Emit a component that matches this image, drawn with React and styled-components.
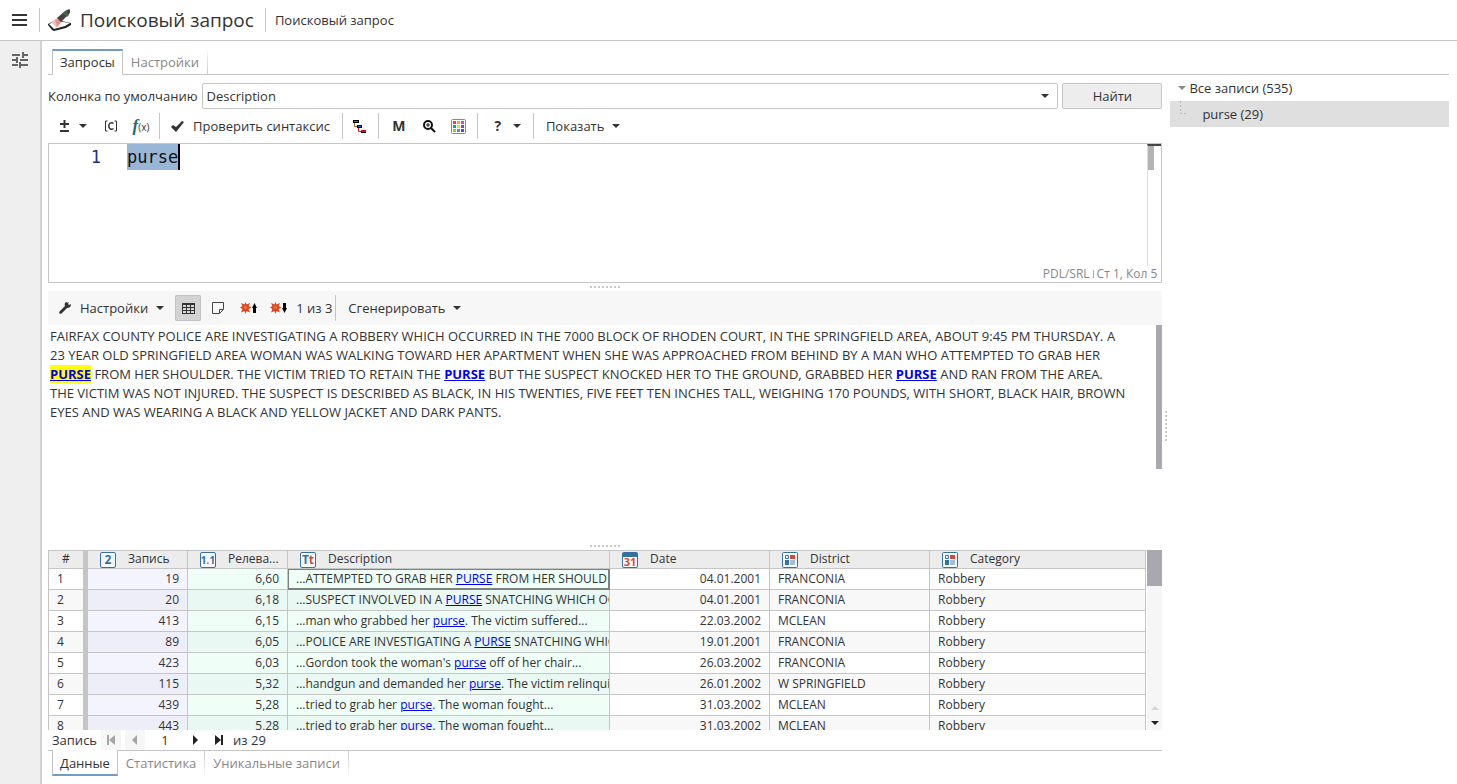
import React from "react";
import styled, { createGlobalStyle, css } from "styled-components";

const line = "#c5c5c5";

const GlobalStyle = createGlobalStyle`
  *, *::before, *::after { box-sizing: border-box; }
  body {
    margin: 0;
    background: #fff;
    color: #333;
    font: 13px/18px "Open Sans", "Noto Sans", sans-serif;
  }
  button, input, select, textarea { font: inherit; color: inherit; }
  svg { display: block; flex: none; }
`;

const Page = styled.div`
  display: flex;
  flex-direction: column;
  height: 100vh;
  min-height: 640px;
`;

const Header = styled.header`
  display: flex;
  align-items: center;
  height: 41px;
  flex: none;
  border-bottom: 1px solid ${line};
`;

const plainButton = css`
  display: flex;
  align-items: center;
  justify-content: center;
  padding: 0;
  border: 0;
  background: none;
  cursor: pointer;
`;

const MenuToggle = styled.button`
  ${plainButton}
  width: 40px;
  height: 24px;
  border-right: 1px solid ${line};
`;

const Title = styled.h1`
  display: flex;
  align-items: center;
  gap: 9px;
  height: 24px;
  margin: 0;
  padding: 0 11px 0 8px;
  border-right: 1px solid ${line};
  font-size: 19px;
  line-height: 24px;
  font-weight: 400;
  white-space: nowrap;
`;

const Crumb = styled.span`
  padding-left: 9px;
`;

const Body = styled.div`
  display: flex;
  flex: 1;
  min-height: 0;
`;

const Rail = styled.aside`
  width: 42px;
  flex: none;
  padding-top: 9px;
  background: #efefef;
  border-right: 2px solid #d2d2d2;
`;

const RailButton = styled.button`
  ${plainButton}
  width: 40px;
  height: 22px;
`;

const Workspace = styled.main`
  display: flex;
  flex-direction: column;
  flex: 1;
  min-width: 0;
  padding: 8px 8px 8px 6px;
`;

const TabBar = styled.nav`
  display: flex;
  flex: none;
  height: 26px;
  padding-left: 4px;
  ${(p) =>
    p.$bottom
      ? css`box-shadow: inset 0 1px ${line};`
      : css`box-shadow: inset 0 -1px ${line};`}
`;

const Tab = styled.button`
  ${plainButton}
  padding: 0 8px;
  color: #888;
  border-right: 1px solid;
  border-image: ${(p) =>
    `linear-gradient(${p.$bottom ? "0deg" : "180deg"}, #fff, ${line}) 1`};
  white-space: nowrap;
  ${(p) =>
    p.$active &&
    css`
      padding: 0 7px;
      color: #333;
      background: #fff;
      border: 1px solid ${line};
      border-image: none;
      ${p.$bottom
        ? css`padding-top: 2px; border-top: 0; border-bottom: 2px solid #6f9bc5;`
        : css`padding-bottom: 2px; border-bottom: 0; border-top: 2px solid #6f9bc5;`}
    `}
`;

const Panes = styled.div`
  display: grid;
  grid-template-columns: minmax(0, 4fr) 8px minmax(0, 1fr);
  flex: 1;
  min-height: 0;
`;

const QueryPane = styled.section`
  display: flex;
  flex-direction: column;
  min-height: 0;
  padding-top: 8px;
`;

const QueryRow = styled.div`
  display: flex;
  align-items: center;
  gap: 4px;
  flex: none;
`;

const SelectBox = styled.div`
  display: grid;
  grid-template-columns: 1fr 24px;
  align-items: center;
  flex: 1;
  height: 26px;
  border: 1px solid ${line};
  border-radius: 2px;

  select {
    grid-area: 1 / 1 / 2 / 3;
    height: 24px;
    padding: 0 4px;
    border: 0;
    background: none;
    appearance: none;
  }
  svg { grid-area: 1 / 2; justify-self: center; }
`;

const FindButton = styled.button`
  ${plainButton}
  width: 100px;
  height: 26px;
  background: #ededed;
  border: 1px solid ${line};
  border-radius: 2px;
`;

const Toolbar = styled.div`
  display: flex;
  align-items: center;
  flex: none;
  height: 34px;
  ${(p) => p.$shaded && css`background: #f7f7f7; padding-left: 1px;`}
`;

const ToolGroup = styled.div`
  display: flex;
  align-items: center;
  height: 26px;
  padding: 0 ${(p) => p.$after ?? 3}px 0 ${(p) => p.$before ?? 2}px;
  border-right: 1px solid ${(p) => (p.$last ? "transparent" : line)};
`;

const ToolButton = styled.button`
  ${plainButton}
  gap: 8px;
  height: 26px;
  padding: 0 9px;
  white-space: nowrap;
`;

const IconButton = styled.button`
  ${plainButton}
  width: 26px;
  height: 26px;
  margin: 0 2px;
  border-radius: 1px;
  ${(p) => p.$pressed && css`background: #d3d3d3; border: 1px solid #c3c3c3;`}
`;

const Counter = styled.span`
  padding-left: 3px;
`;

const Editor = styled.div`
  display: grid;
  grid-template-columns: 78px 1fr 14px;
  grid-template-rows: 1fr 16px;
  flex: none;
  height: 140px;
  border: 1px solid ${line};
`;

const LineNumber = styled.div`
  padding-right: 26px;
  color: #1c2f8c;
  text-align: right;
  font: 17px/26px "DejaVu Sans Mono", monospace;
`;

const Code = styled.textarea`
  padding: 0;
  border: 0;
  outline: 0;
  resize: none;
  overflow: hidden;
  color: #111;
  font: 17px/26px "DejaVu Sans Mono", monospace;
  background:
    linear-gradient(#000, #000) 51px 0 / 2px 26px no-repeat,
    linear-gradient(#99b6d7, #99b6d7) 0 0 / 52px 26px no-repeat;
`;

const Ruler = styled.div`
  border-left: 1px solid #ddd;
  border-top: 2px solid #444;

  &::before {
    content: "";
    display: block;
    width: 6px;
    height: 24px;
    background: #b3b3b3;
  }
`;

const EditorStatus = styled.footer`
  grid-column: 1 / -1;
  display: flex;
  justify-content: flex-end;
  align-items: center;
  gap: 3px;
  padding-right: 4px;
  color: #888;
  font-size: 12px;
  line-height: 16px;

  i { width: 1px; height: 8px; background: #aaa; }
`;

const Splitter = styled.div`
  display: flex;
  align-items: center;
  justify-content: center;
  flex: none;
  height: ${(p) => (p.$vertical ? "auto" : "8px")};

  &::before {
    content: "";
    width: ${(p) => (p.$vertical ? "2px" : "30px")};
    height: ${(p) => (p.$vertical ? "30px" : "2px")};
    background: repeating-linear-gradient(
      ${(p) => (p.$vertical ? "180deg" : "90deg")},
      #c9c9c9 0 2px,
      transparent 2px 4px
    );
  }
`;

const Document = styled.article`
  display: grid;
  grid-template-columns: 1fr 6px;
  flex: none;
  height: 217px;

  p { margin: 0; padding: 2px 28px 2px 2px; line-height: 19px; }
`;

const DocumentThumb = styled.div`
  height: 144px;
  background: #a8a8ae;
`;

const Hit = styled.a`
  color: #0000ee;
  font-weight: ${(p) => (p.$strong ? 700 : 400)};
  background: ${(p) => (p.$current ? "#ff0" : "none")};
`;

const TableArea = styled.div`
  display: grid;
  grid-template-columns: minmax(0, 1fr) 15px;
  column-gap: 1px;
  flex: 1;
  min-height: 0;
  overflow: hidden;
`;

const TableClip = styled.div`
  overflow: hidden;
`;

const Table = styled.table`
  width: 100%;
  table-layout: fixed;
  border-spacing: 0;
  border-top: 1px solid ${line};
  font-size: 12px;
  line-height: 16px;
`;

const HeadCell = styled.th`
  height: 18px;
  padding: 0 8px 0 12px;
  text-align: left;
  vertical-align: top;
  font-weight: 400;
  background: #ececec;
  border-right: 1px solid ${line};
  border-bottom: 1px solid ${line};

  &:first-child {
    padding: 0;
    text-align: center;
    border-left: 1px solid ${line};
    border-right-width: 5px;
  }
`;

const HeadLabel = styled.span`
  display: flex;
  align-items: flex-start;
  gap: 12px;
  height: 17px;

  > :first-child { margin-top: 1px; }
`;

const tints = {
  plain: ["#fff", "#f8f8f8"],
  violet: ["#f4f4ff", "#eeeef8"],
  green: ["#effff8", "#e9f8f2"],
};

const Cell = styled.td`
  height: 21px;
  padding: 0 8px;
  overflow: hidden;
  white-space: nowrap;
  text-align: ${(p) => (p.$right ? "right" : "left")};
  background: ${(p) => tints[p.$tint || "plain"][0]};
  border-right: 1px solid ${line};
  border-bottom: 1px solid ${line};

  tr:nth-child(even) & { background: ${(p) => tints[p.$tint || "plain"][1]}; }
  &:first-child { border-left: 1px solid ${line}; border-right-width: 5px; }
  ${(p) => p.$focused && css`box-shadow: inset 0 0 0 1px #808080; border-color: #808080;`}
`;

const TableScroll = styled.div`
  display: flex;
  flex-direction: column;
  align-items: center;
  gap: 11px;
  padding-bottom: 5px;
  background: #f6f6f6;

  &::before {
    content: "";
    width: 15px;
    height: 36px;
    margin-bottom: auto;
    background: #a8a8ae;
  }
`;

const Pager = styled.div`
  display: flex;
  align-items: center;
  flex: none;
  height: 20px;
  padding-left: 4px;

  label { margin-right: 2px; }

  input {
    width: 36px;
    height: 18px;
    padding: 0;
    border: 0;
    background: none;
    text-align: center;
  }
`;

const PageButton = styled.button`
  ${plainButton}
  width: 20px;
  height: 20px;
  margin: 0 2px;
  color: #222;
  &:disabled { color: #a5a5a5; background: #f6f6f6; }
  & + span { margin-left: 2px; }
`;

const Tree = styled.ul`
  margin: 0;
  padding: 0;
  list-style: none;

  ul { margin: 0; padding: 0; list-style: none; }
`;

const TreeItem = styled.button`
  ${plainButton}
  justify-content: flex-start;
  gap: ${(p) => (p.$child ? "14px" : "3px")};
  width: 100%;
  height: 26px;
  padding-left: ${(p) => (p.$child ? "10px" : "8px")};
  background: ${(p) => (p.$child ? "#dfdfdf" : "none")};
`;

const Caret = ({ color = "#333", up }) => (
  <svg width="8" height="4" viewBox="0 0 8 4" fill={color}>
    <path d={up ? "M0 4h8L4 0z" : "M0 0h8L4 4z"} />
  </svg>
);

const BurgerIcon = () => (
  <svg width="16" height="12" viewBox="0 0 16 12" fill="#333">
    <path d="M0 0h15v2H0zM0 5h15v2H0zM0 10h15v2H0z" />
  </svg>
);

const LogoIcon = () => (
  <svg width="23" height="22" viewBox="0 0 23 22">
    <path d="M0 15l8-4 15 3v2l-5 3-12 3-2-1-4-5z" fill="#222" />
    <path d="M1 15l7-3 14 2-5 3-11 3z" fill="#fff" />
    <path d="M3 13l6-4 4 4-4 6z" fill="#f5c0bb" />
    <path d="M7 11l3-1 3 3-4 5z" fill="#e5928b" />
    <path d="M9 9l8-7 4-2 1 1v3l-9 9z" fill="#454244" />
    <path d="M15 4l4 4 2-2-3-4z" fill="#3f6a45" />
  </svg>
);

const SlidersIcon = () => (
  <svg width="18" height="18" viewBox="0 0 18 18" fill="none" stroke="#666" strokeWidth="2">
    <path d="M1 3h8M12 3h5M12 0v6M1 8h5M9 8h8M6 5v6M1 13h6M10 13h7M9 10v6" />
  </svg>
);

const PlusMinusIcon = () => (
  <svg width="14" height="14" viewBox="0 0 14 14" stroke="#333" strokeWidth="2">
    <path d="M3 5h9M7.500 1v8M3 12h9" />
  </svg>
);

const Glyph = styled.span`
  display: block;
  width: 14px;
  text-align: center;
  font-size: 14px;
  font-weight: 700;
  line-height: 18px;
`;

const BracketIcon = () => (
  <svg width="14" height="12" viewBox="0 0 14 12" fill="none" stroke="#333">
    <path d="M3.500 1h-2v10h2M10.500 1h2v10h-2" />
    <path d="M9.500 3.500C7 1.800 4.800 3.500 4.800 6S7 10.200 9.500 8.500" strokeWidth="1.500" />
  </svg>
);

const FunctionGlyph = styled.span`
  color: #333;
  font: 10px/18px "Open Sans", sans-serif;

  i {
    color: #1f6a78;
    font: italic 700 17px/18px "Liberation Serif", serif;
  }
`;

const CheckIcon = () => (
  <svg width="14" height="12" viewBox="0 0 14 12" fill="#333">
    <path d="M0 7l2-2 3 2 6-6 2 1-8 10z" />
  </svg>
);

const HierarchyIcon = () => (
  <svg width="14" height="14" viewBox="0 0 14 14">
    <path d="M1.500 4v3.500H4" fill="none" stroke="#9a6a10" />
    <path d="M5.500 9v3.500H8" fill="none" stroke="#d02010" />
    <path d="M0 1h6v3H0zM4 6h5v3H4zM8 11h5v3H8z" fill="#000" />
    <path d="M1 2h4v1H1zM5 7h3v1H5z" fill="#1d5cff" />
    <path d="M8 11h5v2H8z" fill="#f00000" />
  </svg>
);

const ZoomIcon = () => (
  <svg width="14" height="14" viewBox="0 0 14 14" fill="none" stroke="#111">
    <circle cx="6" cy="6" r="4" strokeWidth="2" />
    <path d="M9 9l4 4" strokeWidth="2" />
    <path d="M4 6h4M6 4v4" />
  </svg>
);

const paletteColors = ["#ee4035", "#f0a92f", "#e538e0", "#17a47c", "#f2d928", "#8d35df", "#74df35", "#319ae5", "#6140e4"];

const PaletteIcon = () => (
  <svg width="15" height="15" viewBox="0 0 15 15">
    <rect x=".5" y=".5" width="14" height="14" rx="1" fill="#fff" stroke="#888" />
    {paletteColors.map((c, i) => (
      <rect key={c} x={2 + (i % 3) * 4} y={2 + Math.floor(i / 3) * 4} width="3" height="3" fill={c} />
    ))}
  </svg>
);

const WrenchIcon = () => (
  <svg width="14" height="14" viewBox="0 0 14 14" fill="#333">
    <path d="M9 2l2-1-1 2 1 1 2-1c0 3-2 4-4 4l-5 5c-2 2-4 0-2-2l5-5c-1-2 0-4 2-4z" />
  </svg>
);

const GridIcon = () => (
  <svg width="13" height="11" viewBox="0 0 13 11">
    <path d="M0 0h13v11H0z" fill="#333" />
    <path d="M1 2h3v2H1zM5 2h3v2H5zM9 2h3v2H9zM1 5h3v2H1zM5 5h3v2H5zM9 5h3v2H9zM1 8h3v2H1zM5 8h3v2H5zM9 8h3v2H9z" fill="#d8d8d8" />
  </svg>
);

const NoteIcon = () => (
  <svg width="12" height="12" viewBox="0 0 12 12" fill="none" stroke="#444">
    <path d="M.5.5h11v7l-4 4h-7zM7.500 11V7.500H11" />
  </svg>
);

const BurstIcon = ({ down }) => (
  <svg width="17" height="12" viewBox="0 0 17 12">
    <path d="M5.500 0l1 2.500L10 1 8.500 4l3 1.500-3 1.500L10 10.500 6.500 9l-1 3-1-3L1 10.500 2.500 7 0 5.500 2.500 4 1 1l3.500 1.500z" fill="#d8401c" />
    <circle cx="5.500" cy="5.500" r="2" fill="#ee6a30" />
    <path d={down ? "M13 1h3v5h1l-2.500 5L12 6h1z" : "M13 11h3V6h1l-2.500-5L12 6h1z"} fill="#000" />
  </svg>
);

const TypeBox = styled.span`
  display: flex;
  align-items: center;
  justify-content: center;
  width: 16px;
  height: 16px;
  color: #33719f;
  background: #f7fafc;
  border: 1px solid #33719f;
  border-radius: 2px;
  font-size: ${(p) => (p.$small ? "10px" : "12px")};
  font-weight: 700;
  line-height: 14px;

  em { color: #d9483b; font-style: normal; }
`;

const CalendarBox = styled.span`
  width: 16px;
  height: 16px;
  color: #d9483b;
  background: #fff;
  border: 1px solid #33719f;
  border-top-width: 5px;
  border-radius: 2px;
  font-size: 11px;
  font-weight: 700;
  line-height: 10px;
  text-align: center;
`;

const CategoryIcon = () => (
  <svg width="16" height="16" viewBox="0 0 16 16">
    <rect x=".5" y=".5" width="15" height="15" rx="1" fill="#f7fafc" stroke="#33719f" />
    <path d="M3.500 3.500h3v3h-3z" fill="#fff" stroke="#33719f" />
    <path d="M8 3h5v4H8z" fill="#d9483b" />
    <path d="M3 8h4v5H3z" fill="#33719f" />
    <path d="M8 8h5v5H8z" fill="#a3bfd3" />
  </svg>
);

const pageShapes = {
  first: "M1 0h2v10H1zM9 0v10L3 5z",
  prev: "M7 0v10L2 5z",
  next: "M3 0v10l5-5z",
  last: "M1 0v10l6-5zM7 0h2v10H7z",
};

const PageIcon = ({ kind }) => (
  <svg width="10" height="10" viewBox="0 0 10 10" fill="currentColor">
    <path d={pageShapes[kind]} />
  </svg>
);

const columns = [
  { label: "Запись", width: 100, icon: <TypeBox>2</TypeBox> },
  { label: "Релева...", width: 100, icon: <TypeBox $small>1<em>.</em>1</TypeBox> },
  { label: "Description", width: 322, icon: <TypeBox>T<em>t</em></TypeBox> },
  { label: "Date", width: 160, icon: <CalendarBox>31</CalendarBox> },
  { label: "District", width: 160, icon: <CategoryIcon /> },
  { label: "Category", icon: <CategoryIcon /> },
];

const rows = [
  [19, "6,60", "...ATTEMPTED TO GRAB HER ", "PURSE", " FROM HER SHOULD", "04.01.2001", "FRANCONIA"],
  [20, "6,18", "...SUSPECT INVOLVED IN A ", "PURSE", " SNATCHING WHICH OCCURRED", "04.01.2001", "FRANCONIA"],
  [413, "6,15", "...man who grabbed her ", "purse", ". The victim suffered...", "22.03.2002", "MCLEAN"],
  [89, "6,05", "...POLICE ARE INVESTIGATING A ", "PURSE", " SNATCHING WHICH", "19.01.2001", "FRANCONIA"],
  [423, "6,03", "...Gordon took the woman's ", "purse", " off of her chair...", "26.03.2002", "FRANCONIA"],
  [115, "5,32", "...handgun and demanded her ", "purse", ". The victim relinquished", "26.01.2002", "W SPRINGFIELD"],
  [439, "5,28", "...tried to grab her ", "purse", ". The woman fought...", "31.03.2002", "MCLEAN"],
  [443, "5,28", "...tried to grab her ", "purse", ". The woman fought...", "31.03.2002", "MCLEAN"],
];

function Results() {
  return (
    <TableArea>
      <TableClip>
        <Table>
          <colgroup>
            <col width="40" />
            {columns.map((c) => <col key={c.label} width={c.width} />)}
          </colgroup>
          <thead>
            <tr>
              <HeadCell>#</HeadCell>
              {columns.map((c) => (
                <HeadCell key={c.label}><HeadLabel>{c.icon}{c.label}</HeadLabel></HeadCell>
              ))}
            </tr>
          </thead>
          <tbody>
            {rows.map(([record, score, before, hit, after, date, district], i) => (
              <tr key={record}>
                <Cell>{i + 1}</Cell>
                <Cell $right $tint="violet">{record}</Cell>
                <Cell $right $tint="green">{score}</Cell>
                <Cell $tint="green" $focused={i === 0}>{before}<Hit href="#">{hit}</Hit>{after}</Cell>
                <Cell $right>{date}</Cell>
                <Cell>{district}</Cell>
                <Cell>Robbery</Cell>
              </tr>
            ))}
          </tbody>
        </Table>
      </TableClip>
      <TableScroll><Caret up color="#d3d3d3" /><Caret color="#222" /></TableScroll>
    </TableArea>
  );
}

export default function App() {
  return (
    <Page>
      <GlobalStyle />
      <Header>
        <MenuToggle aria-label="Меню"><BurgerIcon /></MenuToggle>
        <Title><LogoIcon />Поисковый запрос</Title>
        <Crumb>Поисковый запрос</Crumb>
      </Header>
      <Body>
        <Rail><RailButton aria-label="Параметры"><SlidersIcon /></RailButton></Rail>
        <Workspace>
          <TabBar>
            <Tab $active>Запросы</Tab>
            <Tab>Настройки</Tab>
          </TabBar>
          <Panes>
            <QueryPane>
              <QueryRow>
                <label htmlFor="column">Колонка по умолчанию</label>
                <SelectBox>
                  <select id="column"><option>Description</option></select>
                  <Caret />
                </SelectBox>
                <FindButton>Найти</FindButton>
              </QueryRow>
              <Toolbar>
                <ToolGroup $before={0}>
                  <ToolButton aria-label="Операторы"><PlusMinusIcon /><Caret /></ToolButton>
                  <IconButton aria-label="Класс"><BracketIcon /></IconButton>
                  <IconButton aria-label="Функция"><FunctionGlyph><i>f</i>(x)</FunctionGlyph></IconButton>
                </ToolGroup>
                <ToolGroup>
                  <ToolButton><CheckIcon />Проверить синтаксис</ToolButton>
                </ToolGroup>
                <ToolGroup>
                  <IconButton aria-label="Иерархия"><HierarchyIcon /></IconButton>
                </ToolGroup>
                <ToolGroup $before={5}>
                  <IconButton aria-label="Макрос"><Glyph>M</Glyph></IconButton>
                  <IconButton aria-label="Поиск"><ZoomIcon /></IconButton>
                  <IconButton aria-label="Цвета"><PaletteIcon /></IconButton>
                </ToolGroup>
                <ToolGroup $before={4}>
                  <ToolButton aria-label="Справка"><Glyph>?</Glyph><Caret /></ToolButton>
                </ToolGroup>
                <ToolGroup $last $before={3}>
                  <ToolButton>Показать<Caret /></ToolButton>
                </ToolGroup>
              </Toolbar>
              <Editor>
                <LineNumber>1</LineNumber>
                <Code aria-label="Текст запроса" defaultValue="purse" spellCheck={false} />
                <Ruler />
                <EditorStatus>PDL/SRL<i />Ст 1, Кол 5</EditorStatus>
              </Editor>
              <Splitter />
              <Toolbar $shaded>
                <ToolButton><WrenchIcon />Настройки<Caret /></ToolButton>
                <IconButton $pressed aria-label="Таблица"><GridIcon /></IconButton>
                <IconButton aria-label="Заметка"><NoteIcon /></IconButton>
                <IconButton aria-label="Предыдущее совпадение"><BurstIcon /></IconButton>
                <IconButton aria-label="Следующее совпадение"><BurstIcon down /></IconButton>
                <ToolGroup $before={0}><Counter>1 из 3</Counter></ToolGroup>
                <ToolGroup $last $before={3}><ToolButton>Сгенерировать<Caret /></ToolButton></ToolGroup>
              </Toolbar>
              <Document>
                <p>
                  FAIRFAX COUNTY POLICE ARE INVESTIGATING A ROBBERY WHICH OCCURRED IN THE 7000 BLOCK OF RHODEN COURT, IN THE SPRINGFIELD AREA, ABOUT 9:45 PM THURSDAY. A 23 YEAR OLD SPRINGFIELD AREA WOMAN WAS WALKING TOWARD HER APARTMENT WHEN SHE WAS APPROACHED FROM BEHIND BY A MAN WHO ATTEMPTED TO GRAB HER <Hit href="#" $strong $current>PURSE</Hit> FROM HER SHOULDER. THE VICTIM TRIED TO RETAIN THE <Hit href="#" $strong>PURSE</Hit> BUT THE SUSPECT KNOCKED HER TO THE GROUND, GRABBED HER <Hit href="#" $strong>PURSE</Hit> AND RAN FROM THE AREA. THE VICTIM WAS NOT INJURED. THE SUSPECT IS DESCRIBED AS BLACK, IN HIS TWENTIES, FIVE FEET TEN INCHES TALL, WEIGHING 170 POUNDS, WITH SHORT, BLACK HAIR, BROWN EYES AND WAS WEARING A BLACK AND YELLOW JACKET AND DARK PANTS.
                </p>
                <DocumentThumb />
              </Document>
              <Splitter />
              <Results />
              <Pager>
                <label htmlFor="record">Запись</label>
                <PageButton disabled aria-label="Первая"><PageIcon kind="first" /></PageButton>
                <PageButton disabled aria-label="Предыдущая"><PageIcon kind="prev" /></PageButton>
                <input id="record" defaultValue="1" />
                <PageButton aria-label="Следующая"><PageIcon kind="next" /></PageButton>
                <PageButton aria-label="Последняя"><PageIcon kind="last" /></PageButton>
                <span>из 29</span>
              </Pager>
              <TabBar $bottom>
                <Tab $bottom $active>Данные</Tab>
                <Tab $bottom>Статистика</Tab>
                <Tab $bottom>Уникальные записи</Tab>
              </TabBar>
            </QueryPane>
            <Splitter $vertical />
            <Tree>
              <li>
                <TreeItem><Caret color="#888" />Все записи (535)</TreeItem>
                <ul>
                  <li>
                    <TreeItem $child>
                      <svg width="8" height="26" viewBox="0 0 8 26" fill="none" stroke="#bbb" strokeDasharray="2 2">
                        <path d="M.5 0v12.500H8" />
                      </svg>
                      purse (29)
                    </TreeItem>
                  </li>
                </ul>
              </li>
            </Tree>
          </Panes>
        </Workspace>
      </Body>
    </Page>
  );
}
